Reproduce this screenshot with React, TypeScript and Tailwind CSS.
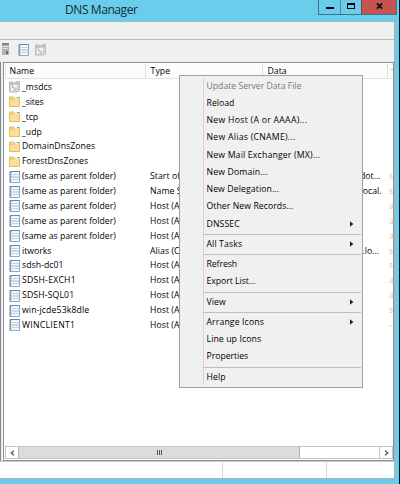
import React from "react";

type Kind = "zone" | "folder" | "record";

interface Row {
  kind: Kind;
  name: string;
  spacing?: string;
  type?: string;
  data?: string;
  dataClass?: string;
  stamp?: string;
}

const rows: Row[] = [
  { kind: "zone", name: "_msdcs", spacing: "tracking-[0.05px]" },
  { kind: "folder", name: "_sites", spacing: "tracking-[-0.1px]" },
  { kind: "folder", name: "_tcp", spacing: "tracking-[-0.1px]" },
  { kind: "folder", name: "_udp" },
  { kind: "folder", name: "DomainDnsZones", spacing: "tracking-[0.06px]" },
  { kind: "folder", name: "ForestDnsZones", spacing: "tracking-[0.03px]" },
  { kind: "record", name: "(same as parent folder)", type: "Start of Authority", data: "[135], sdsh-dc01.dot...", dataClass: "pr-0", stamp: "s" },
  { kind: "record", name: "(same as parent folder)", type: "Name Server (NS)", data: "sdsh-dc01.sdsh.local.", dataClass: "-mr-px pr-0", stamp: "s" },
  { kind: "record", name: "(same as parent folder)", type: "Host (A)", stamp: "a" },
  { kind: "record", name: "(same as parent folder)", type: "Host (A)", stamp: "a" },
  { kind: "record", name: "(same as parent folder)", type: "Host (A)", stamp: "a" },
  { kind: "record", name: "itworks", type: "Alias (CNAME)", data: "sdsh-dc01.sdsh.lo...", dataClass: "pr-[1.5px]", stamp: "s" },
  { kind: "record", name: "sdsh-dc01", spacing: "tracking-[0.05px]", type: "Host (A)", stamp: "s" },
  { kind: "record", name: "SDSH-EXCH1", spacing: "tracking-[0.22px]", type: "Host (A)", stamp: "a" },
  { kind: "record", name: "SDSH-SQL01", spacing: "tracking-[0.12px]", type: "Host (A)", stamp: "a" },
  { kind: "record", name: "win-jcde53k8dle", spacing: "tracking-[0.12px]", type: "Host (A)", stamp: "s" },
  { kind: "record", name: "WINCLIENT1", spacing: "tracking-[0.27px]", type: "Host (A)", stamp: "-" },
];

interface Item {
  label: string;
  spacing: string;
  disabled?: boolean;
  sub?: boolean;
}

const groups: Item[][] = [
  [
    { label: "Update Server Data File", spacing: "tracking-[-0.02px]", disabled: true },
    { label: "Reload", spacing: "tracking-[0.02px]" },
    { label: "New Host (A or AAAA)...", spacing: "tracking-[0.28px]" },
    { label: "New Alias (CNAME)...", spacing: "tracking-[0.27px]" },
    { label: "New Mail Exchanger (MX)...", spacing: "tracking-[0.18px]" },
    { label: "New Domain...", spacing: "tracking-[0.15px]" },
    { label: "New Delegation...", spacing: "tracking-[0.1px]" },
    { label: "Other New Records...", spacing: "tracking-[0.06px]" },
    { label: "DNSSEC", spacing: "tracking-[0.12px]", sub: true },
  ],
  [{ label: "All Tasks", spacing: "tracking-[0.12px]", sub: true }],
  [
    { label: "Refresh", spacing: "tracking-[-0.06px]" },
    { label: "Export List...", spacing: "tracking-[-0.04px]" },
  ],
  [{ label: "View", spacing: "tracking-[0.06px]", sub: true }],
  [
    { label: "Arrange Icons", spacing: "tracking-[0.12px]", sub: true },
    { label: "Line up Icons", spacing: "tracking-[0.1px]" },
    { label: "Properties", spacing: "tracking-[-0.04px]" },
  ],
  [{ label: "Help", spacing: "tracking-[0.06px]" }],
];

function Icon({ kind }: { kind: Kind }) {
  if (kind === "folder")
    return (
      <svg width="11" height="12" viewBox="0 0 11 12" className="shrink-0">
        <path d="M.5 2V1h4l1 .5h5v9H.5z" fill="#f6d88a" stroke="#e0bd6c" />
        <path d="M5.5 1h4.5v1.6H5.5z" fill="#f2f6f5" />
        <path d="M8 1h2v1H8z" fill="#629fc8" />
        <path d="M1 3.7h4.5l1-1H10V10H1z" fill="#fadf94" />
        <path d="M1 3.2h4.3l1-1" fill="none" stroke="#e3bf6b" strokeWidth=".7" />
      </svg>
    );
  if (kind === "zone") return <ZoneIcon />;
  return <RecordIcon />;
}

function ZoneIcon() {
  return (
    <svg width="11" height="12" viewBox="0 0 11 12" className="shrink-0">
      <path d="M.5 2V1h3.5l1 1h1L7 .5h3.5v9L9.3 11H.5z" fill="#d4d4d4" stroke="#bababa" />
      <path d="M2 4h6v6H2z" fill="#f1f1f1" />
      <path d="M3.5 4.5v2l2.3.7M4.5 9H7V7M1.5 3h3M6.5 2.5h3" fill="none" stroke="#a5a5a5" strokeWidth=".9" />
    </svg>
  );
}

function RecordIcon() {
  return (
    <svg width="11" height="12" viewBox="0 0 11 12" className="shrink-0">
      <path d="M1 .5h9.5v11H1z" fill="#f2f8fc" stroke="#9aa7bb" />
      <path d="M1 .5h10" stroke="#6f86b5" />
      <path d="M3 3.5h7M3 8.5h7" stroke="#b8d7e9" />
      <path d="M3 6h7" stroke="#8dc2df" />
      <path d="M1.5 1v10.5" stroke="#7c8792" strokeWidth="1.6" strokeDasharray="1.4 .6" />
    </svg>
  );
}

function Separator() {
  return (
    <div className="ml-[23px] mr-px h-[3px] pt-px">
      <div className="h-px bg-[#bdbdbd]" />
    </div>
  );
}

function ContextMenu() {
  return (
    <div className="absolute left-[179px] top-[75px] h-[313px] w-[184px] border border-[#a0a0a0] bg-[#f0f0f0] py-[1.5px]">
      <div className="absolute bottom-[2px] left-[23px] top-[2px] w-px bg-[#d4d4d4]" />
      <div className="relative">
        {groups.map((g, i) => (
          <React.Fragment key={i}>
            {i > 0 && <Separator />}
            {g.map((item) => (
              <div
                key={item.label}
                className={`flex h-[17.25px] items-center justify-between pl-[26.5px] pr-[8px] ${item.spacing} ${item.disabled ? "text-[#7a7a7a]" : "text-black"}`}
              >
                <span>{item.label}</span>
                {item.sub && (
                  <svg width="4" height="6" viewBox="0 0 4 6">
                    <path d="M0 .3v5.4L3.3 3z" fill="#222" />
                  </svg>
                )}
              </div>
            ))}
          </React.Fragment>
        ))}
      </div>
    </div>
  );
}

function TitleBar() {
  return (
    <div className="flex h-[21px] shrink-0 justify-between bg-[#69cdeb]">
      <div className="pl-[65px] pt-px text-[12px] leading-[18px] tracking-[-0.42px] text-[#132c35]">DNS Manager</div>
      <div className="mr-[2px] flex h-[15px] border-x border-b border-[#3d7587]">
        <div className="flex w-[22px] items-end justify-center border-r border-[#4b899b] pb-[5px]">
          <div className="h-[2px] w-[8px] bg-black" />
        </div>
        <div className="flex w-[20px] items-center justify-center pb-[3px]">
          <div className="h-[6px] w-[8px] border border-t-2 border-black" />
        </div>
        <div className="flex w-[35px] items-center justify-center border-l border-[#70434b] bg-[#c4544f]">
          <svg width="7" height="6" viewBox="0 0 7 6" className="-mt-[3px]">
            <path d="m1 .3 5 5.4m0-5.4L1 5.7" stroke="#111" strokeWidth="1.8" />
          </svg>
        </div>
      </div>
    </div>
  );
}

function Toolbar() {
  return (
    <div className="flex h-[22px] shrink-0 items-center pb-[3px]">
      <svg width="9" height="13" viewBox="0 0 9 13">
        <path d="M2 0h7v12H2z" fill="#b4b4b4" />
        <path d="M2 0h7v2H2z" fill="#858585" />
        <path d="M3 3.5h5M3 5.5h5" stroke="#dedede" />
        <path d="M6 8h2v3H6z" fill="#6d6d6d" />
      </svg>
      <div className="ml-[9px] flex gap-[6px]">
        <RecordIcon />
        <ZoneIcon />
      </div>
    </div>
  );
}

function ListHeader() {
  return (
    <div className="flex h-[15px] shrink-0 border-b border-l border-[#e3e3e3] bg-[#fcfcfc] text-black">
      <div className="w-[140px] shrink-0 border-r border-[#dedede] pl-[3.5px] leading-[15px] tracking-[0.1px]">Name</div>
      <div className="w-[117px] shrink-0 border-r border-[#dedede] pl-[4.5px] leading-[15px] tracking-[0.1px]">Type</div>
      <div className="w-[125px] shrink-0 border-r border-[#dedede] pl-[4.5px] leading-[15px]">Data</div>
      <div className="flex grow justify-end pt-[5px]">
        <div className="h-px w-[2px] bg-[#dfb184]" />
      </div>
    </div>
  );
}

function ScrollBar() {
  return (
    <div className="flex h-[13px] shrink-0 border border-[#c4c4c4] bg-white">
      <div className="flex w-[13px] items-center justify-center border-r border-[#b5b5b5]">
        <svg width="5" height="6" viewBox="0 0 5 6">
          <path d="M4 .7 1.2 3 4 5.3" fill="none" stroke="#555" strokeWidth="1.3" />
        </svg>
      </div>
      <div className="flex w-[281px] items-center justify-center gap-px border-r border-[#aaa] bg-[#dcdcdc]">
        <div className="h-[5px] w-px bg-[#555]" />
        <div className="h-[5px] w-px bg-[#555]" />
        <div className="h-[5px] w-px bg-[#555]" />
      </div>
      <div className="grow" />
      <div className="flex w-[13px] items-center justify-center border-l border-[#c4c4c4]">
        <svg width="5" height="6" viewBox="0 0 5 6">
          <path d="M1 .7 3.8 3 1 5.3" fill="none" stroke="#555" strokeWidth="1.3" />
        </svg>
      </div>
    </div>
  );
}

export default function App() {
  return (
    <div className="relative flex h-[484px] w-[400px] flex-col overflow-hidden whitespace-nowrap border-r border-[#06151a] bg-[#69cdeb] font-['Open_Sans',sans-serif] text-[8.7px] text-black">
      <TitleBar />
      <div className="mr-[4px] flex h-[458px] shrink-0 flex-col border-b border-r border-[#a6b2b5] bg-[#f0f0f0]">
        <div className="h-[19px] shrink-0 border-b border-t border-[#b9bcbd] border-t-[#9bbac3]" />
        <Toolbar />
        <div className="flex h-[399px] shrink-0">
          <div className="mr-[2px] w-px bg-[#818790]" />
          <div className="flex w-[391px] flex-col border border-[#8b9099] bg-white pb-px pl-px pt-px">
            <ListHeader />
            <div className="grow pt-px">
              {rows.map((row, i) => (
                <div key={i} className="flex h-[14.875px] items-center pl-[3.5px]">
                  <Icon kind={row.kind} />
                  <span className={`w-[125px] shrink-0 pl-[2.5px] ${row.spacing ?? ""}`}>{row.name}</span>
                  <span className="w-[116px] shrink-0 pl-[5.5px] tracking-[0.05px]">{row.type}</span>
                  <span className="flex w-[120px] shrink-0 justify-end">
                    <span className={row.dataClass}>{row.data}</span>
                  </span>
                  <span className="ml-auto w-[4px] text-[#e5b98d]">{row.stamp}</span>
                </div>
              ))}
            </div>
            <ScrollBar />
          </div>
        </div>
        <div className="flex h-[17px] shrink-0 border-t border-[#c9c9c9] bg-white">
          <div className="w-[223px] border-r border-[#d5d5d5]" />
          <div className="w-[104px] border-r border-[#d5d5d5]" />
        </div>
      </div>
      <ContextMenu />
    </div>
  );
}
